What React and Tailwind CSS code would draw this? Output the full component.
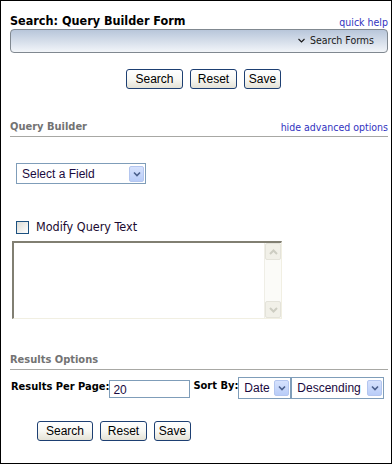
import React from "react";

const tahoma = { fontFamily: '"DejaVu Sans Condensed", "DejaVu Sans", sans-serif', fontStretch: "condensed" };

function Btn({ children, w }) {
  return (
    <button
      className={`${w} h-[20px] rounded-[3px] border border-[#1d3f72] bg-gradient-to-b from-[#ffffff] via-[#f8f8f4] to-[#e4e2d6] text-[12px] leading-none text-black font-['Liberation_Sans',Arial,sans-serif] flex items-center justify-center`}
    >
      {children}
    </button>
  );
}

function Arrow() {
  return (
    <div className="w-[15px] h-[16px] rounded-[2px] border border-[#b4c6ef] bg-gradient-to-b from-[#d6e2fd] to-[#b9cdf8] flex items-center justify-center">
      <svg width="8" height="6" viewBox="0 0 8 6">
        <path d="M1 1.5 L4 4.5 L7 1.5" fill="none" stroke="#4a5f8c" strokeWidth="1.6" />
      </svg>
    </div>
  );
}

function Select({ w, h, label }) {
  return (
    <div
      className={`${w} ${h} border border-[#7f9db9] bg-white flex items-center justify-between pl-[5px] pr-[1px] text-[12px] text-[#1a0a40] font-['Liberation_Sans',Arial,sans-serif]`}
    >
      <span>{label}</span>
      <Arrow />
    </div>
  );
}

export default function App() {
  return (
    <div className="w-[392px] h-[464px] border border-black bg-white pl-[9px] pr-[3px] pt-[9px] box-border">
      <div className="flex justify-between items-end h-[19px]">
        <span className="text-[12.5px] font-bold text-black leading-[16px]" style={tahoma}>
          Search: Query Builder Form
        </span>
        <span className="text-[10.5px] text-[#3232c0] leading-[14px]" style={tahoma}>
          quick help
        </span>
      </div>
      <div className="h-[24px] rounded-[4px] border border-[#808890] bg-gradient-to-b from-[#b8c6da] to-[#f2f5f9] flex items-center justify-end pr-[13px]">
        <svg width="7" height="5" viewBox="0 0 7 5" className="mr-[5px] mt-[-1px]">
          <path d="M0.5 1 L3.5 4 L6.5 1" fill="none" stroke="#1a1a1a" strokeWidth="1.1" />
        </svg>
        <span className="text-[10.5px] text-[#1a1a1a]" style={tahoma}>Search Forms</span>
      </div>

      <div className="mt-[16px] flex gap-[7px] ml-[116px]">
        <Btn w="w-[57px]">Search</Btn>
        <Btn w="w-[47px]">Reset</Btn>
        <Btn w="w-[37px]">Save</Btn>
      </div>

      <div className="mt-[31px] flex justify-between items-end pb-[2px] border-b border-[#a8a8a4]">
        <span className="text-[11px] font-bold text-[#737373] leading-[14px]" style={tahoma}>
          Query Builder
        </span>
        <span className="text-[10.5px] text-[#3232c0] leading-[14px]" style={tahoma}>
          hide advanced options
        </span>
      </div>

      <div className="mt-[26px] ml-[6px] flex">
        <Select w="w-[130px]" h="h-[21px]" label="Select a Field" />
      </div>

      <div className="mt-[36px] ml-[6px] flex items-center">
        <div className="w-[13px] h-[13px] border border-[#1c5180] bg-gradient-to-br from-[#dcdcd6] to-[#ffffff]" />
        <span className="ml-[7px] text-[12.5px] text-[#1a0a30] leading-[14px]" style={tahoma}>
          Modify Query Text
        </span>
      </div>

      <div className="mt-[7px] ml-[2px] w-[270px] h-[78px] border-t-2 border-l-2 border-[#817f72] border-r border-b border-r-[#f1efe2] border-b-[#f1efe2] flex bg-white">
        <div className="flex-1" />
        <div className="w-[17px] bg-[#fbfbf8] border-l border-[#efeee6] flex flex-col justify-between">
          <div className="h-[17px] rounded-[2px] border border-[#e4e3da] bg-[#f1f0e8] flex items-center justify-center">
            <svg width="9" height="6" viewBox="0 0 9 6">
              <path d="M1 5 L4.5 1.5 L8 5" fill="none" stroke="#cdcdc2" strokeWidth="2" />
            </svg>
          </div>
          <div className="h-[17px] rounded-[2px] border border-[#e4e3da] bg-[#f1f0e8] flex items-center justify-center">
            <svg width="9" height="6" viewBox="0 0 9 6">
              <path d="M1 1 L4.5 4.5 L8 1" fill="none" stroke="#cdcdc2" strokeWidth="2" />
            </svg>
          </div>
        </div>
      </div>

      <div className="mt-[34px] flex items-end pb-[2px] border-b border-[#a8a8a4]">
        <span className="text-[11px] font-bold text-[#737373] leading-[14px]" style={tahoma}>
          Results Options
        </span>
      </div>

      <div className="mt-[7px] flex items-start">
        <span className="ml-[1px] mt-[3px] text-[11px] font-bold text-black leading-[14px]" style={tahoma}>
          Results Per Page:
        </span>
        <div className="mt-[3px] w-[81px] h-[18px] border border-[#7f9db9] bg-white text-[12px] text-[#1a0a40] pl-[3px] leading-[18px] font-['Liberation_Sans',Arial,sans-serif]">
          20
        </div>
        <span className="ml-[3px] mt-[2px] text-[11px] font-bold text-black leading-[14px]" style={tahoma}>
          Sort By:
        </span>
        <div className="flex">
          <Select w="w-[53px]" h="h-[22px]" label="Date" />
          <Select w="w-[93px]" h="h-[22px]" label="Descending" />
        </div>
      </div>

      <div className="mt-[22px] flex gap-[7px] ml-[27px]">
        <Btn w="w-[56px]">Search</Btn>
        <Btn w="w-[47px]">Reset</Btn>
        <Btn w="w-[37px]">Save</Btn>
      </div>
    </div>
  );
}
